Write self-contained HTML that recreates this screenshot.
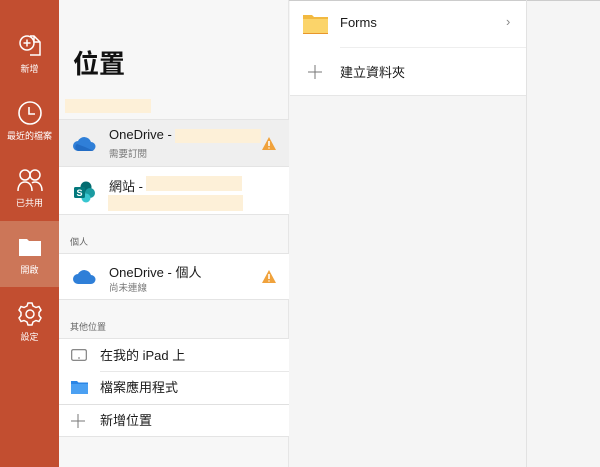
<!DOCTYPE html><html><head><meta charset="utf-8"><style>
*{margin:0;padding:0;box-sizing:border-box}
body{width:600px;height:467px;overflow:hidden;background:#f5f5f5;font-family:"Liberation Sans","Noto Sans CJK TC",sans-serif;position:relative;color:#222}
.abs{position:absolute}
.side{left:0;top:0;width:59px;height:467px;background:#c24e30}
.nav{position:absolute;left:0;width:59px;text-align:center;color:#fff;font-size:9px}
.mid{left:59px;top:0;width:230px;height:467px;background:#f7f7f7;border-right:1px solid #e6e6e6}
.row{position:absolute;left:59px;width:230px;background:#fff;border-bottom:1px solid #e4e4e4}
.hl{background:#fdf0d8}
.t{position:absolute;font-size:13px;color:#1a1a1a}
.s{position:absolute;font-size:9.5px;color:#777}
.h{position:absolute;left:70px;font-size:9px;color:#666}
</style></head><body>
<div class="abs" style="left:0;top:0;width:600px;height:1px;background:#ccc"></div>
<div class="abs side"></div>
<div class="abs" style="left:0;top:221px;width:59px;height:66px;background:#cc7658"></div>
<div class="nav" style="top:33px"><svg width="26" height="26" viewBox="0 0 26 26" fill="none" stroke="#fff" stroke-width="1.5"><path d="M13 3h4l6 6v13h-10"/><path d="M17 3v6h6"/><circle cx="10" cy="10" r="7"/><path d="M10 6.5v7M6.5 10h7"/></svg><div style="margin-top:1px">新增</div></div>
<div class="nav" style="top:100px"><svg width="26" height="26" viewBox="0 0 26 26" fill="none" stroke="#fff" stroke-width="1.6"><circle cx="13" cy="13" r="11"/><path d="M12 7v7h6"/></svg><div style="margin-top:1px">最近的檔案</div></div>
<div class="nav" style="top:167px"><svg width="28" height="26" viewBox="0 0 28 26" fill="none" stroke="#fff" stroke-width="1.5"><circle cx="9" cy="8" r="5"/><circle cx="19" cy="8" r="5"/><path d="M2 24c0-6 3-9 7-9s7 3 7 9M16 16c1-1 2-1 3-1 4 0 7 3 7 9"/></svg><div style="margin-top:1px">已共用</div></div>
<div class="nav" style="top:235px"><svg width="26" height="24" viewBox="0 0 26 24"><path d="M2 4h8l2 2h12v15H2z" fill="#fff"/></svg><div style="margin-top:2px">開啟</div></div>
<div class="nav" style="top:301px"><svg width="26" height="26" viewBox="0 0 26 26" fill="none" stroke="#fff" stroke-width="1.5"><circle cx="13" cy="13" r="4"/><path d="M11 2h4l1 3 3 1.5 3-1 2 3.5-2 2.5v3l2 2.5-2 3.5-3-1-3 1.5-1 3h-4l-1-3-3-1.5-3 1-2-3.5 2-2.5v-3l-2-2.5 2-3.5 3 1 3-1.5z"/></svg><div style="margin-top:1px">設定</div></div>
<div class="abs mid"></div>
<div class="abs" style="left:73px;top:44px;font-size:26px;font-weight:bold;color:#111">位置</div>
<div class="abs hl" style="left:65px;top:99px;width:86px;height:14px"></div>
<div class="row" style="top:119px;height:48px;background:#efefef;border-top:1px solid #e4e4e4"></div>
<svg class="abs" style="left:72px;top:135px" width="26" height="18" viewBox="0 0 26 18"><path d="M6 16a5 5 0 010-10 7 7 0 0113 1 4.5 4.5 0 010 9z" fill="#2f7fd8"/><path d="M6 16a4 4 0 01-1-7l8 3 9 4z" fill="#1a5fb8" opacity=".6"/></svg>
<div class="t" style="left:109px;top:127px">OneDrive - </div>
<div class="abs hl" style="left:175px;top:129px;width:86px;height:14px"></div>
<div class="s" style="left:109px;top:146px">需要訂閱</div>
<svg class="abs" style="left:261px;top:136px" width="16" height="15" viewBox="0 0 16 15"><path d="M8 1l7 13H1z" fill="#f0a23c"/><path d="M8 5v5M8 11.5v1" stroke="#fff" stroke-width="1.6"/></svg>
<div class="row" style="top:167px;height:48px"></div>
<svg class="abs" style="left:73px;top:181px" width="24" height="22" viewBox="0 0 24 22"><circle cx="13" cy="6" r="5.5" fill="#036c70"/><circle cx="17" cy="12" r="5" fill="#1a9ba1"/><circle cx="13" cy="17" r="4.5" fill="#37c6d0"/><rect x="1" y="6" width="11" height="11" rx="1.5" fill="#03787c"/><text x="6.5" y="15" font-size="9" fill="#fff" text-anchor="middle" font-family="Liberation Sans" font-weight="bold">S</text></svg>
<div class="t" style="left:109px;top:176px">網站 - </div>
<div class="abs hl" style="left:146px;top:176px;width:96px;height:15px"></div>
<div class="abs hl" style="left:108px;top:195px;width:135px;height:16px"></div>
<div class="h" style="top:235px">個人</div>
<div class="row" style="top:253px;height:47px;border-top:1px solid #e4e4e4"></div>
<svg class="abs" style="left:72px;top:268px" width="26" height="18" viewBox="0 0 26 18"><path d="M6 16a5 5 0 010-10 7 7 0 0113 1 4.5 4.5 0 010 9z" fill="#2f7fd8"/></svg>
<div class="t" style="left:109px;top:262px">OneDrive - 個人</div>
<div class="s" style="left:109px;top:280px">尚未連線</div>
<svg class="abs" style="left:261px;top:269px" width="16" height="15" viewBox="0 0 16 15"><path d="M8 1l7 13H1z" fill="#f0a23c"/><path d="M8 5v5M8 11.5v1" stroke="#fff" stroke-width="1.6"/></svg>
<div class="h" style="top:320px">其他位置</div>
<div class="row" style="top:338px;height:99px;border-top:1px solid #e4e4e4"></div>
<div class="abs" style="left:100px;top:371px;width:189px;height:1px;background:#e8e8e8"></div>
<div class="abs" style="left:59px;top:404px;width:230px;height:1px;background:#e0e0e0"></div>
<svg class="abs" style="left:71px;top:348px" width="16" height="14" viewBox="0 0 16 14"><rect x=".7" y="1.7" width="14.6" height="10.6" rx="1.5" fill="none" stroke="#777" stroke-width="1.1"/><path d="M7 10h2" stroke="#777"/></svg>
<div class="t" style="left:100px;top:345px">在我的 iPad 上</div>
<svg class="abs" style="left:71px;top:380px" width="17" height="14" viewBox="0 0 17 14"><path d="M0 1h6l1.5 1.5H17V14H0z" fill="#2b86e6"/><path d="M0 4h17v10H0z" fill="#4ba0f2"/></svg>
<div class="t" style="left:100px;top:377px">檔案應用程式</div>
<svg class="abs" style="left:71px;top:414px" width="14" height="14" viewBox="0 0 14 14"><path d="M7 0v14M0 7h14" stroke="#777" stroke-width="1"/></svg>
<div class="t" style="left:100px;top:410px">新增位置</div>
<div class="abs" style="left:290px;top:1px;width:236px;height:95px;background:#fff;border-bottom:1px solid #e6e6e6"></div>
<div class="abs" style="left:526px;top:0;width:1px;height:467px;background:#e2e2e2"></div>
<svg class="abs" style="left:303px;top:14px" width="25" height="20" viewBox="0 0 25 20"><path d="M0 1h9l2 2h14v17H0z" fill="#f2b940"/><path d="M0 5h25v15H0z" fill="#fbd46a"/><path d="M0 19h25v1H0z" fill="#e8962a"/></svg>
<div class="t" style="left:340px;top:15px">Forms</div>
<div class="abs" style="left:506px;top:14px;color:#888;font-size:13px">›</div>
<div class="abs" style="left:340px;top:47px;width:186px;height:1px;background:#eee"></div>
<svg class="abs" style="left:308px;top:65px" width="14" height="14" viewBox="0 0 14 14"><path d="M7 0v14M0 7h14" stroke="#777" stroke-width="1"/></svg>
<div class="t" style="left:340px;top:62px">建立資料夾</div>
</body></html>
